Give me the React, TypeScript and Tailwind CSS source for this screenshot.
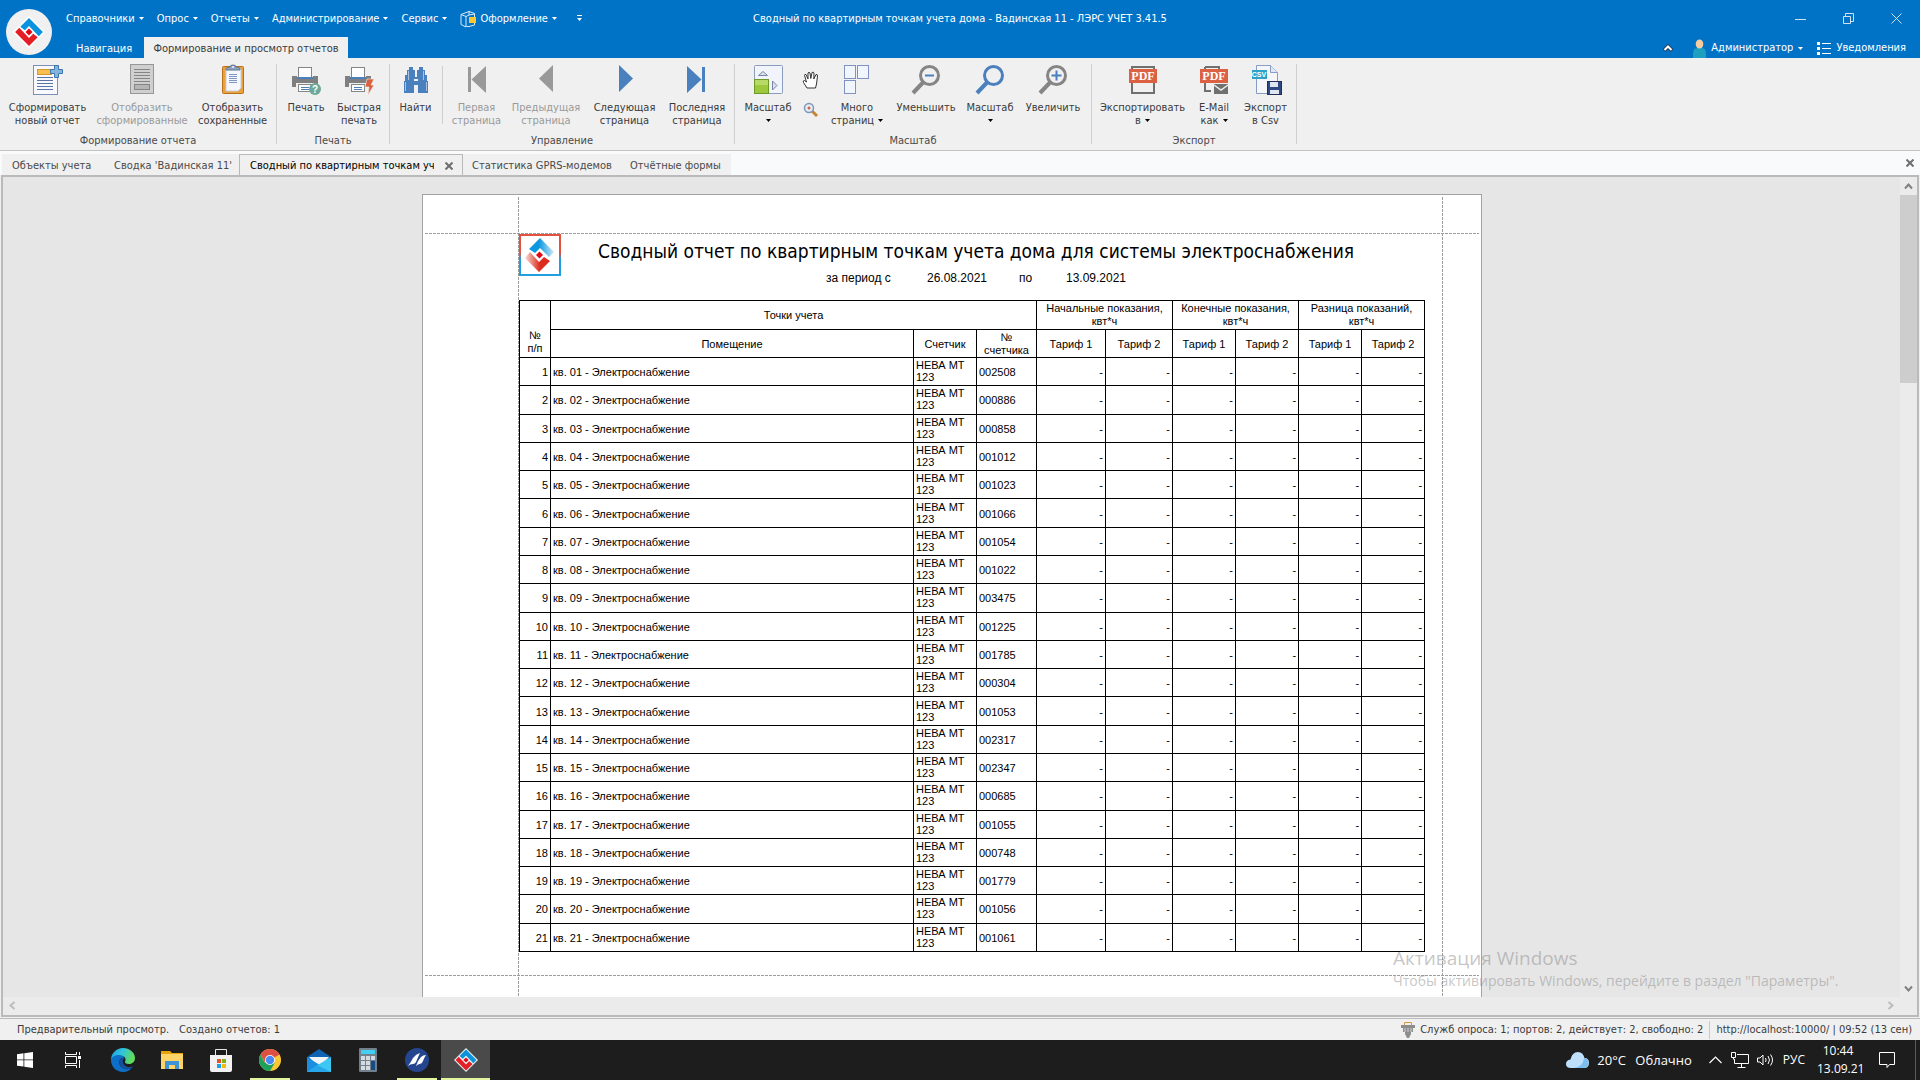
import type { ReactNode } from "react";

const uiFont = "font-['DejaVu_Sans_Condensed','DejaVu_Sans',sans-serif]";

const meters = [
  "002508", "000886", "000858", "001012", "001023", "001066", "001054",
  "001022", "003475", "001225", "001785", "000304", "001053", "002317",
  "002347", "000685", "001055", "000748", "001779", "001056", "001061",
];

const menus = ["Справочники", "Опрос", "Отчеты", "Администрирование", "Сервис"];

function Caret({ className = "" }: { className?: string }) {
  return (
    <svg className={"shrink-0 " + className} width="5" height="3" viewBox="0 0 5 3" fill="currentColor" aria-hidden="true">
      <path d="M0 0h5L2.5 3z" />
    </svg>
  );
}

function Diamond({ size, outlined = false }: { size: number; outlined?: boolean }) {
  return (
    <svg width={size} height={size} viewBox="-46 -46 92 92" aria-hidden="true">
      <path d="M0-46 46 0 0 46-46 0z" fill={outlined ? "#e8eef2" : "#fff"} />
      <path d="M0-40 40 0 28 12 0-17-12-5-25-15z" fill="#0a93dc" />
      <path d="M0 40-40 0-28-12 0 17 12 5 25 15z" fill="#e31e24" />
      <path d="M0-10 10 0 0 10-10 0z" fill="#e30613" />
    </svg>
  );
}

function Icon({ children }: { children: ReactNode }) {
  return <svg className="shrink-0" width="32" height="32" viewBox="0 0 32 32" aria-hidden="true">{children}</svg>;
}

function IconNewReport() {
  return (
    <Icon>
      <rect x="1.5" y="1.5" width="24" height="29" fill="#f7f9fd" stroke="#7d8fb8" />
      <rect x="5.5" y="5.5" width="14" height="5" fill="#f7bf4f" stroke="#d8952a" />
      <path d="M5 13.5h16M5 16.5h16M5 19.5h16M5 22.5h16M5 25.5h16" stroke="#5b74a8" />
      <path d="M22.5 1.5h4v4h4v4h-4v4h-4v-4h-4v-4h4z" fill="#84b4dd" stroke="#3c76ae" />
    </Icon>
  );
}

function IconGenerated() {
  return (
    <Icon>
      <rect x="4.5" y=".5" width="23" height="29" fill="#cfcfcf" stroke="#979797" />
      <path d="M8 5.5h16M8 8.5h16M8 11.5h16M8 14.5h16M8 17.5h16" stroke="#858585" />
      <rect x="8.5" y="20.5" width="15" height="5" fill="#b5b5b5" stroke="#858585" />
    </Icon>
  );
}

function IconSaved() {
  return (
    <Icon>
      <rect x="5.5" y="2.5" width="21" height="27" rx="1" fill="#eaa13a" stroke="#b9701c" />
      <path d="M9 5h15v19l-3 3H9z" fill="#f5f7fd" stroke="#c9ccda" />
      <path d="M12 10.5h8M12 12.5h8M12 14.5h8M12 16.5h8M12 18.5h8" stroke="#7d96c4" />
      <path d="M9 5q0-2 4-2 0-2 3-2t3 2q4 0 4 2v1H9z" fill="#8ea3bd" stroke="#5d7491" />
      <circle cx="16" cy="3" r="1" fill="#f0f0f0" />
    </Icon>
  );
}

function PrinterBody() {
  return (
    <>
      <rect x="8.5" y="3.5" width="13" height="10" fill="#fff" stroke="#858585" />
      <path d="M2 12h5v2h16v-2h5v11h-4v-4H6v4H2z" fill="#7f7f7f" />
      <path d="M7 13h16v2H7z" fill="#4a80bd" />
      <path d="M6 19h18v9H6z" fill="#efefef" />
      <rect x="8.5" y="20.5" width="13" height="7" fill="#fff" stroke="#858585" />
      <path d="M11 23.5h8M11 25.5h8" stroke="#4a80bd" />
    </>
  );
}

function IconPrint() {
  return (
    <Icon>
      <PrinterBody />
      <circle cx="25" cy="25" r="6" fill="#6fa898" />
      <text x="25" y="29" textAnchor="middle" fontSize="10" fontWeight="700" fill="#fff" className="font-['Liberation_Sans',sans-serif]">?</text>
    </Icon>
  );
}

function IconQuickPrint() {
  return (
    <Icon>
      <PrinterBody />
      <path d="M24 15h7l-3 6h3l-6 10 1-8h-4z" fill="#d9603f" stroke="#efefef" strokeWidth=".6" />
    </Icon>
  );
}

function IconFind() {
  return (
    <Icon>
      <path d="M9 3h4v3h2v7h2V6h2V3h4v3h2v5h2v6h1v12H18v-8h-4v8H4V17h1v-6h2V6h2z" fill="#4a80bd" />
      <path d="M8.5 7v9M23.5 7v9M5.5 18v9M26.5 18v9" stroke="#a9c4e2" />
      <path d="M14 15h4v2h-4z" fill="#efefef" />
    </Icon>
  );
}

function IconFirst() {
  return <Icon><path d="M7 3h3v25H7zM25 2v27L10.5 15.5z" fill="#999" /></Icon>;
}

function IconPrev() {
  return <Icon><path d="M23 1v27L9 14.5z" fill="#999" /></Icon>;
}

function IconNext() {
  return <Icon><path d="M10 1v27l14-13.5z" fill="#4a80bd" /></Icon>;
}

function IconLast() {
  return <Icon><path d="M6 2v27l14.5-13.5zM21 3h3v25h-3z" fill="#4a80bd" /></Icon>;
}

function IconScale() {
  return (
    <Icon>
      <rect x="2.5" y="1.5" width="28" height="28" rx="1" fill="#f1f4fb" stroke="#8b9cbd" />
      <rect x="2.5" y="15.5" width="14" height="14" fill="#9cc83c" stroke="#6d9a24" />
      <path d="M3 16h13v5H3z" fill="#b7da66" />
      <path d="M6.5 11.5h9L11 7.5zM20.500 17v9l4.500-4.500z" fill="#dde3ee" stroke="#7886a3" />
    </Icon>
  );
}

function IconPages() {
  return (
    <Icon>
      <g fill="#f1f5fd" stroke="#7f92c3">
        <rect x="3.5" y="1.5" width="11" height="13" />
        <rect x="16.5" y="1.5" width="11" height="13" />
        <rect x="3.5" y="16.5" width="11" height="13" />
      </g>
    </Icon>
  );
}

function Lens({ color, sign = "" }: { color: string; sign?: string }) {
  return (
    <Icon>
      <circle cx="19.5" cy="11.5" r="9" fill="none" stroke={color} strokeWidth="3" />
      <path d="M3 29 13 18.5" stroke={color} strokeWidth="4" />
      <path d={sign} stroke="#4a80bd" strokeWidth="2" />
    </Icon>
  );
}

function PdfBadge({ x }: { x: number }) {
  return (
    <g>
      <rect x={x} y="5" width="28" height="14" fill="#dc6142" />
      <text x={x + 14} y="16" textAnchor="middle" fontSize="12" fontWeight="700" fill="#fff" className="font-['Liberation_Serif',serif]">PDF</text>
    </g>
  );
}

function IconPdf() {
  return (
    <Icon>
      <rect x="5" y="3" width="22" height="26" fill="none" stroke="#707070" strokeWidth="2" />
      <PdfBadge x={2} />
    </Icon>
  );
}

function IconMail() {
  return (
    <Icon>
      <path d="M7 3h14v3M7 3v24h6" fill="none" stroke="#707070" strokeWidth="2" />
      <PdfBadge x={2} />
      <rect x="16" y="20" width="14" height="10" fill="#707070" />
      <path d="m16 21 7 5 7-5" fill="none" stroke="#efefef" strokeWidth="1.5" />
    </Icon>
  );
}

function IconCsv() {
  return (
    <Icon>
      <path d="M6.5 1.5h14l7 7v21h-21z" fill="#f4f6fc" stroke="#8b9cc4" />
      <path d="M20.5 1.5v7h7" fill="#dfe6f5" stroke="#8b9cc4" />
      <rect x="2" y="6" width="15" height="9" fill="#2ea3c9" />
      <text x="9" y="13" textAnchor="middle" fontSize="7" fontWeight="700" fill="#fff" className="font-['Liberation_Sans',sans-serif]">CSV</text>
      <rect x="17.500" y="17.500" width="14" height="13" fill="#2f4a80" stroke="#1f2f55" />
      <path d="M20 18h8v5h-8zM20 26h9v4h-9z" fill="#dfe6f3" />
    </Icon>
  );
}

function HandIcon() {
  return (
    <svg width="18" height="18" viewBox="0 0 18 18" aria-hidden="true">
      <path d="M5 17 1.5 11.5Q.5 9.5 2.5 9.5L4.5 11 2.5 4.5Q2.5 3 4 3.5L6 8 6 2Q7 .5 8 2L8.8 7.5 10 1.5Q11.5 .5 12 2L11.8 8 14 3.5Q15.5 3 15.5 5L14.5 13 13.5 17z" fill="#fff" stroke="#333" />
    </svg>
  );
}

function SmallLens() {
  return (
    <svg width="16" height="16" viewBox="0 0 16 16" aria-hidden="true">
      <path d="m9 9 5 5" stroke="#c88432" strokeWidth="3" />
      <circle cx="6" cy="6" r="4.5" fill="#e4edf7" stroke="#7f97b5" strokeWidth="1.5" />
      <circle cx="6" cy="6" r="1.5" fill="#d9603f" />
    </svg>
  );
}

type Cmd = { width: string; lines: [string, string?]; icon: ReactNode; disabled?: boolean; menu?: boolean };

function Command({ width, lines, icon, disabled, menu }: Cmd) {
  return (
    <button disabled={disabled} className={"flex shrink-0 flex-col items-center leading-[13px] text-[#3b3b3b] disabled:text-[#9a9a9a] " + width}>
      {icon}
      <span className="mt-[5px] whitespace-nowrap">{lines[0]}</span>
      <span className="flex h-[13px] items-center gap-1 whitespace-nowrap">
        {lines[1]}
        {menu && <Caret className="text-black" />}
      </span>
    </button>
  );
}

function Group({ title, children }: { title: string; children: ReactNode }) {
  return (
    <section className="flex shrink-0 flex-col border-r border-[#cfcfcf]">
      <div className="flex h-[70px] shrink-0 items-start px-[3px]">{children}</div>
      <h2 className="text-center leading-[14px] text-[#4a4a4a]">{title}</h2>
    </section>
  );
}

function Header() {
  return (
    <header className="relative bg-[#0173c7] text-white">
      <button aria-label="Меню приложения" className="absolute top-[9px] left-[6px] flex size-[46px] items-center justify-center rounded-full bg-[#f0f0f0]">
        <Diamond size={32} />
      </button>
      <div className="grid h-[37px] grid-cols-[1fr_auto_1fr] items-center">
        <nav className="flex items-center gap-[13px] pl-[66px]">
          {menus.map((m) => (
            <button key={m} className="flex items-center gap-1">{m}<Caret /></button>
          ))}
          <button className="flex items-center gap-1">
            <svg width="16" height="18" viewBox="0 0 16 18" fill="none" aria-hidden="true">
              <path d="M1 4.500 9 1.500l5.500 2V15L9 16.500H6.500M1 4.500v10L6 17V6.500L1 4.500M6 6.500 9 5V1.500M9 5l5.500-1" stroke="#dcecf8" />
              <rect x="9" y="7" width="7" height="6" fill="#fcc62e" />
            </svg>
            <span>Оформление</span><Caret />
          </button>
          <button aria-label="Настройка панели" className="ml-[7px]">
            <svg width="5" height="7" viewBox="0 0 5 7" fill="currentColor" aria-hidden="true"><path d="M0 0h5v1H0zM0 3h5L2.5 6z" /></svg>
          </button>
        </nav>
        <h1>Сводный по квартирным точкам учета дома - Вадинская 11 - ЛЭРС УЧЕТ 3.41.5</h1>
        <div className="flex justify-end text-[#d3e2ee]">
          <button aria-label="Свернуть" className="flex h-9 w-12 items-center justify-center">
            <svg width="11" height="11" viewBox="0 0 11 11" stroke="currentColor"><path d="M0 6.5h11" /></svg>
          </button>
          <button aria-label="Восстановить" className="flex h-9 w-12 items-center justify-center">
            <svg width="11" height="11" viewBox="0 0 11 11" fill="none" stroke="currentColor"><path d="M.5 3.5h7v7h-7zM2.5 3V.5h8v8H8" /></svg>
          </button>
          <button aria-label="Закрыть" className="flex h-9 w-12 items-center justify-center">
            <svg width="11" height="11" viewBox="0 0 11 11" stroke="currentColor"><path d="m.5.5 10 10M10.5.5l-10 10" /></svg>
          </button>
        </div>
      </div>
      <div className="flex h-[21px] items-center justify-between pr-[14px] pl-[64px]">
        <div className="flex h-full">
          <button className="w-[80px] px-3 pt-[3px]">Навигация</button>
          <button className="w-[204px] bg-[#f0f0f0] pt-[3px] text-center text-[#3b3b3b]">Формирование и просмотр отчетов</button>
        </div>
        <div className="flex items-center pt-px">
          <button aria-label="Свернуть ленту" className="mr-[20px]">
            <svg width="10" height="8" viewBox="0 0 10 8" fill="none" aria-hidden="true">
              <path d="m1 6.5 4-4 4 4" stroke="#1d3e5c" strokeWidth="4" />
              <path d="m1.5 6 3.5-3.5L8.5 6" stroke="#fff" strokeWidth="2" />
            </svg>
          </button>
          <button className="mr-[14px] flex items-center gap-[5px]">
            <svg width="13" height="19" viewBox="0 0 13 19" aria-hidden="true">
              <path d="M0 19v-4q0-6 4-6h5q4 0 4 6v4z" fill="#1d9fc0" />
              <ellipse cx="6.5" cy="5" rx="3.8" ry="4.500" fill="#f6cda0" />
            </svg>
            <span>Администратор</span><Caret />
          </button>
          <button className="flex items-center gap-[5px]">
            <svg width="14" height="13" viewBox="0 0 14 13" fill="#fff" aria-hidden="true">
              <path d="M0 0h3v3H0zM0 5h3v3H0zM0 10h3v3H0zM5 1h9v1H5zM5 6h9v1H5zM5 11h9v1H5z" />
            </svg>
            <span>Уведомления</span>
          </button>
        </div>
      </div>
    </header>
  );
}

function Ribbon() {
  return (
    <div className="flex h-[93px] border-b border-[#c3c3c3] bg-[#f0f0f0] py-[6px]">
      <Group title="Формирование отчета">
        <Command width="w-[89px]" lines={["Сформировать", "новый отчет"]} icon={<IconNewReport />} />
        <Command width="w-[100px]" lines={["Отобразить", "сформированные"]} icon={<IconGenerated />} disabled />
        <Command width="w-[81px]" lines={["Отобразить", "сохраненные"]} icon={<IconSaved />} />
      </Group>
      <Group title="Печать">
        <Command width="w-[52px]" lines={["Печать"]} icon={<IconPrint />} />
        <Command width="w-[54px]" lines={["Быстрая", "печать"]} icon={<IconQuickPrint />} />
      </Group>
      <Group title="Управление">
        <Command width="w-[45px]" lines={["Найти"]} icon={<IconFind />} />
        <div className="mx-1 mt-[2px] h-[58px] w-px bg-[#cfcfcf]" />
        <Command width="w-[59px]" lines={["Первая", "страница"]} icon={<IconFirst />} disabled />
        <Command width="w-[80px]" lines={["Предыдущая", "страница"]} icon={<IconPrev />} disabled />
        <Command width="w-[77px]" lines={["Следующая", "страница"]} icon={<IconNext />} />
        <Command width="w-[68px]" lines={["Последняя", "страница"]} icon={<IconLast />} />
      </Group>
      <Group title="Масштаб">
        <Command width="w-[60px]" lines={["Масштаб"]} icon={<IconScale />} menu />
        <div className="flex w-[26px] flex-col items-center gap-[13px] pt-[7px]">
          <button aria-label="Рука"><HandIcon /></button>
          <button aria-label="Лупа"><SmallLens /></button>
        </div>
        <Command width="w-[66px]" lines={["Много", "страниц"]} icon={<IconPages />} menu />
        <Command width="w-[72px]" lines={["Уменьшить"]} icon={<Lens color="#858585" sign="M15 11.5h9" />} />
        <Command width="w-[56px]" lines={["Масштаб"]} icon={<Lens color="#4a80bd" />} menu />
        <Command width="w-[70px]" lines={["Увеличить"]} icon={<Lens color="#858585" sign="M14.5 11.5h10M19.5 6.5v10" />} />
      </Group>
      <Group title="Экспорт">
        <Command width="w-[95px]" lines={["Экспортировать", "в"]} icon={<IconPdf />} menu />
        <Command width="w-[48px]" lines={["E-Mail", "как"]} icon={<IconMail />} menu />
        <Command width="w-[55px]" lines={["Экспорт", "в Csv"]} icon={<IconCsv />} />
      </Group>
    </div>
  );
}

function CloseMark() {
  return (
    <svg width="8" height="8" viewBox="0 0 8 8" stroke="#6e6e6e" strokeWidth="2" aria-hidden="true">
      <path d="m.5.5 7 7M7.5.5l-7 7" />
    </svg>
  );
}

function DocumentTabs() {
  const tab = "shrink-0 bg-[#f0f0f0] pt-[2px] text-left whitespace-nowrap text-[#4a4a4a]";
  return (
    <div className="flex h-6 items-stretch bg-[#f9fafc] px-[2px] pt-[3px]">
      <button className={tab + " w-[102px] pl-[10px]"}>Объекты учета</button>
      <button className={tab + " w-[135px] pl-[10px]"}>Сводка 'Вадинская 11'</button>
      <div className="flex w-[224px] shrink-0 items-center justify-between border border-b-0 border-[#b9b9b9] bg-[#f0f0f0] pt-px pr-[9px] pl-[10px] text-black">
        <button className="w-[184px] overflow-hidden text-left whitespace-nowrap">Сводный по квартирным точкам учета дома</button>
        <button aria-label="Закрыть вкладку"><CloseMark /></button>
      </div>
      <button className={tab + " w-[157px] pl-[9px]"}>Статистика GPRS-модемов</button>
      <button className={tab + " w-[111px] pl-[10px]"}>Отчётные формы</button>
      <button aria-label="Закрыть" className="mr-1 ml-auto pb-1"><CloseMark /></button>
    </div>
  );
}

function ReportLogo() {
  return (
    <svg className="shrink-0" width="42" height="42" viewBox="0 0 42 42" aria-hidden="true">
      <defs>
        <linearGradient id="frame" x1="0" y1="0" x2="0" y2="1">
          <stop offset=".45" stopColor="#e2523f" />
          <stop offset=".6" stopColor="#1f9fe0" />
        </linearGradient>
        <linearGradient id="blueFade" x1="0" y1="0" x2="1" y2="0">
          <stop offset=".4" stopColor="#0a98e0" />
          <stop offset="1" stopColor="#cfe9f8" />
        </linearGradient>
        <linearGradient id="redFade" x1="0" y1="0" x2="1" y2="0">
          <stop offset="0" stopColor="#f7dcd5" />
          <stop offset=".6" stopColor="#dc2a1c" />
        </linearGradient>
      </defs>
      <rect x="1" y="1" width="40" height="40" fill="#fff" stroke="url(#frame)" strokeWidth="2" />
      <path d="M21 4 35 18 30 23 21 14 16 19 10 15z" fill="url(#blueFade)" />
      <path d="M20 38 6 24 11 18 20 28 25 23 31 27z" fill="url(#redFade)" />
      <path d="M20.5 17.5 24 21l-3.5 3.5L17 21z" fill="#e30613" />
    </svg>
  );
}

function ReportTable() {
  const cell = "border border-black";
  return (
    <table className="mt-2 h-[652px] w-[906px] table-fixed border-collapse text-[11px] leading-[13px]">
      <colgroup>
        <col className="w-[31px]" />
        <col className="w-[363px]" />
        <col className="w-[63px]" />
        <col className="w-[60px]" />
        <col className="w-[69px]" />
        <col className="w-[67px]" />
        <col className="w-[63px]" />
        <col className="w-[63px]" />
        <col className="w-[63px]" />
        <col className="w-[63px]" />
      </colgroup>
      <thead className="[&_th]:font-normal">
        <tr className="h-[29px]">
          <th rowSpan={2} className={cell + " pb-[2px] align-bottom"}>№<br />п/п</th>
          <th colSpan={3} className={cell}>Точки учета</th>
          <th colSpan={2} className={cell}>Начальные показания,<br />квт*ч</th>
          <th colSpan={2} className={cell}>Конечные показания,<br />квт*ч</th>
          <th colSpan={2} className={cell}>Разница показаний,<br />квт*ч</th>
        </tr>
        <tr className="h-[28px]">
          <th className={cell + " pt-px"}>Помещение</th>
          <th className={cell + " pt-px"}>Счетчик</th>
          <th className={cell}>№<br />счетчика</th>
          {[0, 1, 2].map((g) => [1, 2].map((t) => <th key={g + "-" + t} className={cell + " pt-px"}>Тариф {t}</th>))}
        </tr>
      </thead>
      <tbody>
        {meters.map((num, i) => (
          <tr key={num}>
            <td className={cell + " pt-[2px] pr-[2px] text-right"}>{i + 1}</td>
            <td className={cell + " pt-[2px] pl-[2px]"}>кв. {String(i + 1).padStart(2, "0")} - Электроснабжение</td>
            <td className={cell + " pb-px pl-[2px] leading-[12px]"}>НЕВА МТ<br />123</td>
            <td className={cell + " pt-[2px] pl-[2px]"}>{num}</td>
            {[0, 1, 2, 3, 4, 5].map((c) => <td key={c} className={cell + " pt-[2px] pr-[2px] text-right"}>-</td>)}
          </tr>
        ))}
      </tbody>
    </table>
  );
}

function ReportPage() {
  const guideX = "absolute inset-x-[2px] h-px bg-[repeating-linear-gradient(to_right,#9c9c9c_0_3px,transparent_3px_4px)]";
  const guideY = "absolute inset-y-[2px] w-px bg-[repeating-linear-gradient(to_bottom,#9c9c9c_0_3px,transparent_3px_4px)]";
  return (
    <article className="relative h-[820px] w-[1060px] shrink-0 border border-[#a2a2a2] bg-white pt-[39px] pl-[96px] font-['Liberation_Sans',sans-serif] text-black">
      <div className={guideX + " top-[38px]"} />
      <div className={guideX + " top-[780px]"} />
      <div className={guideY + " left-[95px]"} />
      <div className={guideY + " left-[1019px]"} />
      <div className="flex w-[906px] items-start">
        <ReportLogo />
        <div className="flex-1 pr-[34px] text-center">
          <h2 className="pt-[4px] text-[19px] leading-[26px] whitespace-nowrap font-['DejaVu_Sans_Condensed','DejaVu_Sans',sans-serif]">
            Сводный отчет по квартирным точкам учета дома для системы электроснабжения
          </h2>
          <p className="flex justify-center text-[12px] leading-[28px]">
            <span className="w-[101px] text-left">за период с</span>
            <span className="w-[92px] text-left">26.08.2021</span>
            <span className="w-[47px] text-left">по</span>
            <span>13.09.2021</span>
          </p>
        </div>
      </div>
      <ReportTable />
    </article>
  );
}

function Chevron({ d, color }: { d: string; color: string }) {
  return (
    <svg width="9" height="9" viewBox="0 0 9 9" fill="none" stroke={color} strokeWidth="2" aria-hidden="true">
      <path d={d} />
    </svg>
  );
}

function Preview() {
  return (
    <main className="relative mx-px mb-px flex min-h-0 flex-1 flex-col border-2 border-[#bababa] bg-[#ebebeb]">
      <div className="flex min-h-0 flex-1">
        <div className="flex min-w-0 flex-1 items-start justify-center overflow-hidden bg-[#e6e6e6] pt-[17px] pl-px">
          <ReportPage />
        </div>
        <div className="flex w-[17px] flex-col items-center justify-between">
          <div className="flex w-full flex-col items-center">
            <button aria-label="Вверх" className="flex h-[18px] items-center"><Chevron d="m1 6.5 3.5-4 3.5 4" color="#808080" /></button>
            <div className="h-[188px] w-full bg-[#cdcdcd]" />
          </div>
          <button aria-label="Вниз" className="flex h-[18px] items-center"><Chevron d="m1 2.5 3.5 4 3.5-4" color="#808080" /></button>
        </div>
      </div>
      <div className="flex h-[18px] items-center justify-between pr-[22px] pb-[2px] pl-[5px]">
        <button aria-label="Влево"><Chevron d="m6.5 1-4 3.5 4 3.5" color="#bdbdbd" /></button>
        <button aria-label="Вправо"><Chevron d="m2.5 1 4 3.5-4 3.5" color="#bdbdbd" /></button>
      </div>
      <div className="pointer-events-none absolute right-[71px] bottom-[24px] w-[453px] font-['Open_Sans',sans-serif] text-[#8d8d8d]/50">
        <p className="text-[19px] leading-[26px]">Активация Windows</p>
        <p className="text-[14px] leading-[20px] whitespace-nowrap">Чтобы активировать Windows, перейдите в раздел "Параметры".</p>
      </div>
    </main>
  );
}

function StatusBar() {
  return (
    <footer className="flex h-[22px] items-center justify-between border-t border-[#bababa] bg-[#f0f0f0] pr-2 pl-[17px] text-[#3b3b3b]">
      <div className="flex gap-[10px]">
        <span>Предварительный просмотр.</span>
        <span>Создано отчетов: 1</span>
      </div>
      <div className="flex items-center">
        <svg width="14" height="16" viewBox="0 0 14 16" className="mr-[5px]" aria-hidden="true">
          <path d="M3.5 4V.5h7V4" fill="none" stroke="#d69a3c" />
          <path d="M0 3h14v3H0zM2 6h10v4H2zM4 10h6v2l-2 4H6l-2-4z" fill="#8d8d8d" />
          <path d="M4 6v4M7 6v4M10 6v4" stroke="#d5d5d5" />
        </svg>
        <span>Служб опроса: 1; портов: 2, действует: 2, свободно: 2</span>
        <span className="mx-[6px] h-[18px] w-px bg-[#c9c9c9]" />
        <span>http://localhost:10000/ | 09:52 (13 сен)</span>
      </div>
    </footer>
  );
}

function TaskButton({ label, children, state = "" }: { label: string; children: ReactNode; state?: string }) {
  return (
    <button aria-label={label} className={"flex h-10 w-[49px] flex-col items-center " + (state === "active" ? "bg-[#4a4a4a]" : "")}>
      <span className="flex flex-1 items-center">{children}</span>
      {state && <span className={"-mt-[2px] h-[2px] bg-[#e4f5a0] " + (state === "active" ? "w-full" : "w-10")} />}
    </button>
  );
}

function Taskbar() {
  return (
    <div className="flex h-10 shrink-0 items-center justify-between bg-[#1d1d1d] font-['Open_Sans',sans-serif] text-white">
      <div className="flex">
        <TaskButton label="Пуск">
          <svg width="16" height="16" viewBox="0 0 16 16" fill="#fff"><path d="M0 2.2 6.5 1.3v6.2H0zM7.3 1.2 16 0v7.500H7.300zM0 8.300h6.500v6.300L0 13.700zM7.300 8.300H16V16l-8.700-1.200z" /></svg>
        </TaskButton>
        <TaskButton label="Представление задач">
          <svg width="17" height="16" viewBox="0 0 17 16" fill="none" stroke="#fff"><path d="M.5 0v2.5h11V0M.5 4.5h11v7H.5zM.5 16v-2.5h11V16M14.5 0v3M14.5 8v8" /><path d="M13 4h3v3h-3z" fill="#fff" stroke="none" /></svg>
        </TaskButton>
        <TaskButton label="Edge">
          <svg width="24" height="24" viewBox="0 0 24 24">
            <defs>
              <linearGradient id="edgeTop" x1="0" y1="0" x2="1" y2=".3"><stop offset="0" stopColor="#1b9ce0" /><stop offset=".5" stopColor="#31c3dd" /><stop offset="1" stopColor="#5fdc5a" /></linearGradient>
            </defs>
            <path d="M0 12C0 5 5.500 0 12 0s12 4.500 12 10c0 3.500-2.500 6-6 6-3 0-4.500-1-4-2.200C15.500 11 14 8 10 8 5 8 1 11 0 12z" fill="url(#edgeTop)" />
            <path d="M0 12c.5-3 4-5 8.500-5 2 0 4.500 1 5 3-3-1-6 2-5 6 1 3.500 5 6 9 5 1.500-.4 3-1 4-2-2 3-5.500 5-9.500 5C5.500 24 0 19 0 12z" fill="#0d6fc8" />
            <path d="M8.500 16c-1-4 2-7 5-6-3 2-2 8 4 9 2 .2 3.500-.3 4.800-1-1.500 2.500-4 3.500-6.800 3.200-3.500-.2-6.200-2.200-7-5.200z" fill="#14509b" />
          </svg>
        </TaskButton>
        <TaskButton label="Проводник">
          <svg width="22" height="18" viewBox="0 0 22 18"><path d="M0 0h9l2 2h11v16H0z" fill="#e5a50a" /><path d="M0 3h22v15H0z" fill="#fcd468" /><path d="M4 18v-8h14v8h-4v-4H8v4z" fill="#3f94d6" /></svg>
        </TaskButton>
        <TaskButton label="Microsoft Store">
          <svg width="24" height="24" viewBox="0 0 24 24"><path d="M6.5 7V1.5h11V7" fill="none" stroke="#e8e8e8" /><path d="M1 7h22v15q0 2-2 2H3q-2 0-2-2z" fill="#f2f2f2" /><path d="M8 11h4v4H8z" fill="#e8502b" /><path d="M13 11h4v4h-4z" fill="#7cb518" /><path d="M8 16h4v4H8z" fill="#1aa3e8" /><path d="M13 16h4v4h-4z" fill="#f8b90c" /></svg>
        </TaskButton>
        <TaskButton label="Chrome" state="open">
          <svg width="22" height="22" viewBox="0 0 22 22"><circle cx="11" cy="11" r="11" fill="#fcc934" /><path d="M1.470 5.500A11 11 0 0 0 11 22l4.800-8.200L6 14z" fill="#1fa15d" /><path d="M11 11 6.500 14 1.470 5.500a11 11 0 0 1 19.060 0z" fill="#dd5144" /><circle cx="11" cy="11" r="5" fill="#fff" /><circle cx="11" cy="11" r="4.200" fill="#4a8af4" /></svg>
        </TaskButton>
        <TaskButton label="Почта">
          <svg width="24" height="23" viewBox="0 0 24 23"><path d="M0 8 12 0l12 8v6H0z" fill="#0f63b3" /><path d="M2 8h20l-8 9h-4z" fill="#eef4f8" /><path d="M0 8 24 23H0z" fill="#1a8fe0" /><path d="M24 8 9 17l13 6h2z" fill="#3cc8f2" /><path d="m0 23 10-7 14 7z" fill="#27a7ea" /></svg>
        </TaskButton>
        <TaskButton label="Калькулятор">
          <svg width="18" height="24" viewBox="0 0 18 24"><rect width="18" height="24" rx="1" fill="#71808c" /><path d="M2 2h14v4H2z" fill="#41d0f2" /><path d="M2 8h4v4H2zM7 8h4v4H7zM12 8h4v4h-4zM2 13h4v4H2zM7 13h4v4H7zM2 18h4v4H2zM7 18h4v4H7z" fill="#d3dbe1" /><path d="M12 13h4v9h-4z" fill="#154c86" /></svg>
        </TaskButton>
        <TaskButton label="Опрос" state="open">
          <svg width="24" height="24" viewBox="0 0 24 24"><circle cx="12" cy="12" r="12" fill="#25468f" /><path d="M3 18q3-4 5-8 3-4 7-5-2 4-4 9-1 2-3 2-3 0-5 2zM11 18q2-6 5-9 2-2 5-2-2 3-3 6-1 3-3 3-2 0-4 2z" fill="#fff" /></svg>
        </TaskButton>
        <TaskButton label="ЛЭРС УЧЕТ" state="active"><Diamond size={24} outlined /></TaskButton>
      </div>
      <div className="flex h-full items-center">
        <button className="flex items-center text-[13px]">
          <svg width="23" height="17" viewBox="0 0 23 17" className="mr-2" aria-hidden="true">
            <path d="M5 16q-5 0-5-4t4.500-4.500Q6 0 12 0q5 0 6.500 6 4.500 0 4.500 5t-5 5z" fill="#bfe0fa" />
            <path d="M8 16q9-1 10-10 4.500 0 4.500 5t-5 5z" fill="#7dbdf0" />
          </svg>
          <span className="w-[38px] text-left">20°C</span>
          <span>Облачно</span>
        </button>
        <button aria-label="Скрытые значки" className="ml-[17px]">
          <svg width="13" height="8" viewBox="0 0 13 8" fill="none" stroke="#fff" strokeWidth="1.2"><path d="m.5 7 6-6 6 6" /></svg>
        </button>
        <button aria-label="Сеть" className="ml-[9px]">
          <svg width="18" height="16" viewBox="0 0 18 16" fill="none" stroke="#fff"><path d="M6 2.5h11.500v9H3.500V7M10.500 12v3M6.500 15.500h8M.5.5h4v5h-4zM2.500 5.500v2" /></svg>
        </button>
        <button aria-label="Громкость" className="ml-[8px]">
          <svg width="17" height="14" viewBox="0 0 17 14" fill="none" stroke="#fff"><path d="M.5 5v4H3l3 3V2L3 5zM8.5 5q1.200 2 0 4M11 3q3 4 0 8M13.500 1.500q4 5.500 0 11" /></svg>
        </button>
        <button className="ml-[9px] text-[12px]">РУС</button>
        <button className="ml-[12px] w-[42px] text-center text-[12px] leading-[18px]">
          10:44<br />13.09.21
        </button>
        <button aria-label="Уведомления" className="mr-[20px] ml-[20px]">
          <svg width="16" height="16" viewBox="0 0 16 16" fill="none" stroke="#fff"><path d="M.5.5h15v12h-5l-2.500 3v-3H.5z" /></svg>
        </button>
        <span className="mr-1 h-full w-px bg-[#5a5a5a]" />
      </div>
    </div>
  );
}

export default function App() {
  return (
    <div className={"flex h-screen flex-col overflow-hidden bg-[#f0f0f0] text-[11px] leading-[14px] " + uiFont}>
      <Header />
      <Ribbon />
      <DocumentTabs />
      <Preview />
      <StatusBar />
      <Taskbar />
    </div>
  );
}
